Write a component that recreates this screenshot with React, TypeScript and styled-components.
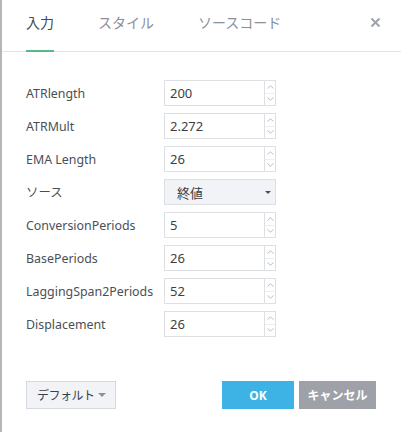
import React, { useState } from 'react';
import styled, { createGlobalStyle } from 'styled-components';

const GlobalStyle = createGlobalStyle`
  html, body { margin: 0; padding: 0; background: #fff; }
  body { font-family: "Noto Sans", "Noto Sans CJK JP", sans-serif; }
  * { box-sizing: border-box; }
`;

const FONT = `"Noto Sans", "Noto Sans CJK JP", sans-serif`;

const Dialog = styled.div`
  width: 401px;
  height: 432px;
  background: #fff;
  border-left: 2px solid #b4b6b9;
  display: flex;
  flex-direction: column;
  font-family: ${FONT};
`;

const Header = styled.div`
  height: 52px;
  border-bottom: 1px solid #e0e3e6;
  display: flex;
  align-items: stretch;
  padding-left: 24px;
  padding-right: 20px;
  gap: 44px;
`;

const Tab = styled.div<{ $active: boolean }>`
  font-size: 14px;
  color: ${p => (p.$active ? '#454a52' : '#8a9098')};
  display: flex;
  align-items: center;
  padding-bottom: 6px;
  border-bottom: 2px solid ${p => (p.$active ? '#53b987' : 'transparent')};
  margin-bottom: -1px;
  cursor: pointer;
`;

const Close = styled.button`
  margin-left: auto;
  align-self: flex-start;
  margin-top: 17px;
  border: none;
  background: none;
  padding: 0;
  width: 11px;
  height: 11px;
  cursor: pointer;
  display: flex;
`;

const Body = styled.div`
  padding: 28px 0 0 24px;
  display: grid;
  grid-template-columns: 138px 112px;
  row-gap: 7px;
  align-items: center;
`;

const Label = styled.div`
  font-size: 12.4px;
  color: #4a4f57;
  white-space: nowrap;
`;

const NumberBox = styled.div`
  height: 26px;
  border: 1px solid #dcdfe3;
  display: flex;
  background: #fff;
`;

const NumberInput = styled.input`
  flex: 1;
  min-width: 0;
  border: none;
  outline: none;
  padding: 0 0 0 5px;
  font-family: ${FONT};
  font-size: 13px;
  color: #3b3f45;
  background: transparent;
`;

const Spin = styled.div`
  width: 11px;
  border-left: 1px solid #dcdfe3;
  display: flex;
  flex-direction: column;
`;

const SpinHalf = styled.div<{ $top?: boolean }>`
  flex: 1;
  display: flex;
  align-items: center;
  justify-content: center;
  border-bottom: ${p => (p.$top ? '1px solid #eceef1' : 'none')};
`;

const SelectBox = styled.div`
  height: 26px;
  border: 1px solid #dcdfe3;
  background: #f1f3f6;
  display: flex;
  align-items: center;
  padding: 0 4px 0 12px;
  font-size: 13px;
  color: #3b3f45;
  cursor: pointer;
`;

const Caret = styled.span<{ $color: string; $size: number }>`
  margin-left: auto;
  width: 0;
  height: 0;
  border-left: ${p => p.$size}px solid transparent;
  border-right: ${p => p.$size}px solid transparent;
  border-top: ${p => p.$size}px solid ${p => p.$color};
`;

const Footer = styled.div`
  margin-top: 44px;
  padding: 0 25px 0 24px;
  display: flex;
  align-items: center;
  gap: 5px;
`;

const DefaultButton = styled.div`
  width: 90px;
  height: 28px;
  border: 1px solid #d6d9dd;
  background: #f1f3f6;
  display: flex;
  align-items: center;
  padding: 0 9px 0 10px;
  font-size: 12px;
  letter-spacing: -0.5px;
  white-space: nowrap;
  color: #3b3f45;
  margin-right: auto;
  cursor: pointer;
`;

const ActionButton = styled.button<{ $bg: string; $w: number }>`
  width: ${p => p.$w}px;
  height: 28px;
  border: none;
  background: ${p => p.$bg};
  color: #fff;
  font-family: ${FONT};
  font-weight: 700;
  font-size: 12px;
  cursor: pointer;
  padding: 0;
`;

const Chevron: React.FC<{ up?: boolean }> = ({ up }) => (
  <svg width="7" height="4" viewBox="0 0 7 4">
    <path
      d={up ? 'M0.5 3.5 L3.5 0.8 L6.5 3.5' : 'M0.5 0.5 L3.5 3.2 L6.5 0.5'}
      fill="none"
      stroke="#b9bdc3"
      strokeWidth="1"
    />
  </svg>
);

const fields: { label: string; value?: string; select?: boolean }[] = [
  { label: 'ATRlength', value: '200' },
  { label: 'ATRMult', value: '2.272' },
  { label: 'EMA Length', value: '26' },
  { label: 'ソース', value: '終値', select: true },
  { label: 'ConversionPeriods', value: '5' },
  { label: 'BasePeriods', value: '26' },
  { label: 'LaggingSpan2Periods', value: '52' },
  { label: 'Displacement', value: '26' },
];

const tabs = ['入力', 'スタイル', 'ソースコード'];

export default function App() {
  const [active, setActive] = useState(0);
  const [values, setValues] = useState(fields.map(f => f.value || ''));

  return (
    <>
      <GlobalStyle />
      <Dialog>
        <Header>
          {tabs.map((t, i) => (
            <Tab key={t} $active={i === active} onClick={() => setActive(i)}>
              {t}
            </Tab>
          ))}
          <Close aria-label="close">
            <svg width="11" height="11" viewBox="0 0 11 11">
              <path d="M1.5 1.5 L9.5 9.5 M9.5 1.5 L1.5 9.5" stroke="#9ea3aa" strokeWidth="2" />
            </svg>
          </Close>
        </Header>
        <Body>
          {fields.map((f, i) => (
            <React.Fragment key={f.label}>
              <Label>{f.label}</Label>
              {f.select ? (
                <SelectBox>
                  {values[i]}
                  <Caret $color="#4a4f57" $size={3} />
                </SelectBox>
              ) : (
                <NumberBox>
                  <NumberInput
                    value={values[i]}
                    onChange={e => {
                      const next = [...values];
                      next[i] = e.target.value;
                      setValues(next);
                    }}
                  />
                  <Spin>
                    <SpinHalf $top>
                      <Chevron up />
                    </SpinHalf>
                    <SpinHalf>
                      <Chevron />
                    </SpinHalf>
                  </Spin>
                </NumberBox>
              )}
            </React.Fragment>
          ))}
        </Body>
        <Footer>
          <DefaultButton>
            デフォルト
            <Caret $color="#8e9298" $size={4} />
          </DefaultButton>
          <ActionButton $bg="#3cb3e4" $w={72}>OK</ActionButton>
          <ActionButton $bg="#9ea1a7" $w={77}>キャンセル</ActionButton>
        </Footer>
      </Dialog>
    </>
  );
}
